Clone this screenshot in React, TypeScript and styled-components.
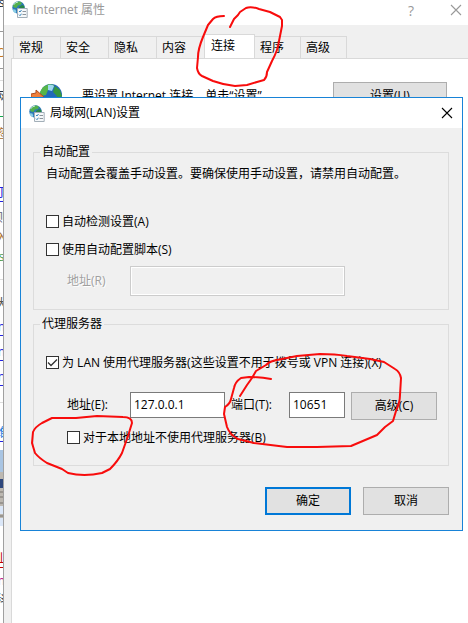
import React from "react";
import styled, { createGlobalStyle, css } from "styled-components";

const GlobalStyle = createGlobalStyle`
  * { box-sizing: border-box; }
  body {
    margin: 0;
    background: #fff;
    color: #000;
    font: 12px/16px "Open Sans", "Noto Sans CJK SC", sans-serif;
  }
  button, input { font: inherit; color: inherit; border-radius: 0; }
`;

const Desktop = styled.div`
  position: relative;
  display: flex;
  min-height: 100vh;
  overflow: hidden;
`;

/* Sliver of the web page that shows beside the window */
const PageEdge = styled.div`
  flex: none;
  width: 3px;
  height: 100vh;
  overflow: hidden;
`;

const Slice = styled.div<{ $h: number; $color?: string; $line?: string }>`
  display: flex;
  justify-content: center;
  align-items: flex-end;
  height: ${(p) => p.$h}px;
  overflow: hidden;
  white-space: nowrap;
  color: ${(p) => p.$color ?? "#333"};
  border-bottom: 1px solid ${(p) => p.$line ?? "transparent"};
`;

const Thumbnail = styled.svg`
  display: block;
`;

const Window = styled.div`
  flex: 1;
  min-width: 0;
  display: flex;
  flex-direction: column;
  background: #f0f0f0;
  border-left: 1px solid #a0a0a0;
`;

const TitleBar = styled.header<{ $dialog?: boolean }>`
  display: flex;
  align-items: center;
  background: #fff;
  ${(p) =>
    p.$dialog
      ? css`
          height: 30px;
          padding: 0 8px;
          gap: 5px;
        `
      : css`
          height: 25px;
          padding: 0 5px 6px 8px;
          gap: 5px;
          color: #999;
        `}
`;

const Title = styled.h1`
  flex: 1;
  margin: 0;
  font-size: 12px;
  font-weight: 400;
`;

const CaptionButton = styled.button`
  display: grid;
  place-items: center;
  width: 14px;
  height: 14px;
  padding: 0;
  border: 0;
  background: none;
  font-size: 14px;
`;

const CaptionGroup = styled.div`
  display: flex;
  gap: 31px;
`;

const Tabs = styled.div`
  display: flex;
  align-items: flex-end;
  height: 34px;
  padding-left: 9px;
`;

const Tab = styled.button<{ $active?: boolean; $narrow?: boolean }>`
  width: ${(p) => (p.$narrow ? 46 : 48)}px;
  height: 23px;
  padding: 0 0 0 5px;
  text-align: left;
  background: #f0f0f0;
  border: 1px solid #d9d9d9;
  border-left-width: 0;
  &:first-child { border-left-width: 1px; }
  ${(p) =>
    p.$active &&
    css`
      width: 50px;
      height: 25px;
      padding: 0 0 2px 6px;
      background: #fff;
      border-bottom-color: #fff;
    `}
`;

const TabPage = styled.main`
  flex: 1;
  margin-left: 7px;
  background: #fff;
  border-left: 1px solid #d9d9d9;
  box-shadow: 0 -1px 0 #d9d9d9;
`;

const SetupRow = styled.div`
  display: flex;
  align-items: flex-start;
  padding: 23px 21px 0 19px;
`;

const SetupText = styled.p`
  flex: 1;
  margin: 6px 0 0 19px;
`;

const PushButton = styled.button<{ $w: number; $default?: boolean }>`
  width: ${(p) => p.$w}px;
  height: 28px;
  padding: 0;
  background: #e1e1e1;
  border: ${(p) => (p.$default ? "2px solid #0078d7" : "1px solid #adadad")};
`;

const Dialog = styled.section`
  position: absolute;
  top: 97px;
  left: 20px;
  right: 5px;
  background: #f0f0f0;
  border: 1px solid #1883d7;
`;

const DialogBody = styled.div`
  display: flex;
  flex-direction: column;
  gap: 6px;
  padding: 16px 13px 15px 12px;
`;

const Group = styled.fieldset`
  min-width: 0;
  margin: 0;
  padding: 6px 11px 13px 12px;
  border: 1px solid #dcdcdc;
`;

const GroupTitle = styled.legend`
  margin-left: -6px;
  padding: 0 2px;
`;

const Note = styled.p`
  margin: 0 0 26px;
`;

const CheckRow = styled.label<{ $indent?: boolean; $gap?: number }>`
  display: flex;
  align-items: center;
  gap: 3px;
  height: 28px;
  padding-bottom: 1px;
  margin-top: ${(p) => p.$gap ?? 0}px;
  margin-left: ${(p) => (p.$indent ? 21 : 0)}px;
  white-space: nowrap;
`;

const BoxFrame = styled.span`
  display: grid;
  flex: none;
  > * { grid-area: 1 / 1; }
  svg { visibility: hidden; pointer-events: none; }
  input:checked + svg { visibility: visible; }
`;

const Box = styled.input`
  appearance: none;
  width: 13px;
  height: 13px;
  margin: 0;
  background: #fff;
  border: 1px solid #333;
`;

const FieldRow = styled.div<{ $gap: number }>`
  display: flex;
  align-items: flex-start;
  margin-top: ${(p) => p.$gap}px;
  padding-left: 21px;
`;

const FieldLabel = styled.label<{ $w: number; $muted?: boolean }>`
  flex: none;
  width: ${(p) => p.$w}px;
  line-height: ${(p) => (p.$muted ? 30 : 26)}px;
  color: ${(p) => (p.$muted ? "#a0a0a0" : "#000")};
  text-shadow: ${(p) => (p.$muted ? "1px 1px 0 #fff" : "none")};
`;

const TextBox = styled.input<{ $w: number }>`
  width: ${(p) => p.$w}px;
  height: 26px;
  margin-right: 6px;
  padding: 0 3px 2px;
  background: #fff;
  border: 1px solid #7a7a7a;
  &:disabled {
    height: 30px;
    background: #f0f0f0;
    border-color: #ccc;
    box-shadow: inset 0 0 0 1px #fff;
  }
`;

const Actions = styled.footer`
  display: flex;
  justify-content: flex-end;
  gap: 12px;
  margin-top: 15px;
`;

const Markup = styled.svg`
  position: absolute;
  top: 0;
  left: 0;
  pointer-events: none;
`;

const SettingsIcon = () => (
  <svg width="16" height="17" viewBox="0 0 16 17" aria-hidden="true">
    <circle cx="6.5" cy="6.5" r="6.2" fill="#2b78b8" />
    <path d="M4 1l4-.5 2 1.4-1.2 2L6 4.6 4.5 7 2 6.4.8 4.8z" fill="#53b04c" />
    <path d="M7 6l3-2 2.4 1v3L9 11 7 9z" fill="#268547" />
    <path d="M1.5 4Q3 1.2 6 1" stroke="#c5ead7" fill="none" />
    <path d="M.4 8.2l3 .3 1 2.4-1 1.2Q1 11 .4 8.2z" fill="#8dd0e6" />
    <path d="M5.5 7.5h9.7v9H5.5z" fill="#f5f8fa" stroke="#a3afb8" />
    <path d="M7 10l1 1 1.5-2M7 13.7l1 1 1.5-2" stroke="#3686bd" fill="none" />
    <path d="M10.5 10.5h3.5M10.5 13.5h3.5" stroke="#8c949b" />
  </svg>
);

const ConnectIcon = () => (
  <svg width="32" height="32" viewBox="0 0 32 32" aria-hidden="true">
    <circle cx="20" cy="13" r="11" fill="#2369b8" />
    <path d="M12 5l6-3 5 1-1 4-5 1-2 5-5 1-1-4z" fill="#56b548" />
    <path d="M24 4l5 4 2 6-3 4-3-5-3-3z" fill="#35973f" />
    <path d="M17 3q4-1 6 1l-2 5-4-1z" fill="#9ed8ef" />
    <path d="M0 12l5-1V8l8 7-8 8v-4H0z" fill="#ef7f3b" stroke="#ac4b20" />
  </svg>
);

const Cross = ({ color }: { color: string }) => (
  <svg width="12" height="12" viewBox="0 0 12 12" aria-hidden="true">
    <path d="M1 1l10 10M11 1L1 11" stroke={color} strokeWidth="1.1" />
  </svg>
);

const Check = ({
  label,
  checked,
  indent,
  gap,
}: {
  label: string;
  checked?: boolean;
  indent?: boolean;
  gap?: number;
}) => (
  <CheckRow $indent={indent} $gap={gap}>
    <BoxFrame>
      <Box type="checkbox" defaultChecked={checked} />
      <svg width="13" height="13" viewBox="0 0 13 13" aria-hidden="true">
        <path d="M2 6.5l3 3 6-6" stroke="#333" strokeWidth="1.3" fill="none" />
      </svg>
    </BoxFrame>
    {label}
  </CheckRow>
);

const tabs = ["常规", "安全", "隐私", "内容", "连接", "程序", "高级"];

export default function App() {
  return (
    <>
      <GlobalStyle />
      <Desktop>
        <PageEdge aria-hidden="true">
          <Slice $h={12} $color="#123">s</Slice>
          <Slice $h={20} $line="#999" />
          <Slice $h={30} $color="#c87820">O</Slice>
          <Slice $h={7} $line="#999" />
          <Slice $h={12} $line="#ddd" />
          <Slice $h={25} $color="#234">网</Slice>
          <Slice $h={11} $line="#12a84b" />
          <Slice $h={26} $color="#a86c30">您</Slice>
          <Slice $h={59} $color="#2222e0" $line="#2222e0">丁</Slice>
          <Slice $h={25} $color="#667">则</Slice>
          <Slice $h={20} $color="#a87030">入</Slice>
          <Slice $h={19} $color="#4a9a4a">s</Slice>
          <Slice $h={14} $line="#ddd" />
          <Slice $h={33} $color="#555">大</Slice>
          <Slice $h={23} $color="#2222e0" $line="#2222e0">n</Slice>
          <Slice $h={25} $color="#2222e0" $line="#2222e0">n</Slice>
          <Slice $h={25} $color="#2222e0" $line="#2222e0">n</Slice>
          <Slice $h={17} $line="#ddd" />
          <Slice $h={39} $color="#1d78e0" $line="#2222e0">维</Slice>
          <Slice $h={8} />
          <Thumbnail width="3" height="76" viewBox="0 0 3 76">
            <path d="M0 0h3v76H0z" fill="#bcb8b1" />
            <path d="M0 0h3v22H0z" fill="#a8c4e2" />
            <path d="M0 29h3v9H0z" fill="#2e477c" />
            <path d="M0 42h3M0 47h3M0 53h3M0 66h3" stroke="#77736f" />
            <path d="M0 56h3v8H0zM0 68h3v8H0z" fill="#dbe7f8" />
          </Thumbnail>
          <Slice $h={42} $color="#c00000" $line="#c00000">山</Slice>
          <Slice $h={22} $color="#c0108a">n</Slice>
          <Slice $h={19} $color="#234">科</Slice>
        </PageEdge>

        <Window>
          <TitleBar>
            <SettingsIcon />
            <Title>Internet 属性</Title>
            <CaptionGroup>
              <CaptionButton aria-label="帮助">?</CaptionButton>
              <CaptionButton aria-label="关闭">
                <Cross color="#999" />
              </CaptionButton>
            </CaptionGroup>
          </TitleBar>
          <Tabs role="tablist">
            {tabs.map((name, i) => (
              <Tab
                key={name}
                role="tab"
                $active={name === "连接"}
                $narrow={i > 4}
                aria-selected={name === "连接"}
              >
                {name}
              </Tab>
            ))}
          </Tabs>
          <TabPage>
            <SetupRow>
              <ConnectIcon />
              <SetupText>要设置 Internet 连接，单击“设置”</SetupText>
              <PushButton $w={114}>设置(U)</PushButton>
            </SetupRow>
          </TabPage>
        </Window>

        <Dialog role="dialog" aria-labelledby="lan-title">
          <TitleBar $dialog>
            <SettingsIcon />
            <Title id="lan-title">局域网(LAN)设置</Title>
            <CaptionButton aria-label="关闭">
              <Cross color="#000" />
            </CaptionButton>
          </TitleBar>
          <DialogBody>
            <Group>
              <GroupTitle>自动配置</GroupTitle>
              <Note>自动配置会覆盖手动设置。要确保使用手动设置，请禁用自动配置。</Note>
              <Check label="自动检测设置(A)" />
              <Check label="使用自动配置脚本(S)" />
              <FieldRow $gap={2}>
                <FieldLabel htmlFor="script" $w={63} $muted>地址(R)</FieldLabel>
                <TextBox id="script" $w={215} disabled />
              </FieldRow>
            </Group>
            <Group>
              <GroupTitle>代理服务器</GroupTitle>
              <Check label="为 LAN 使用代理服务器(这些设置不用于拨号或 VPN 连接)(X)" checked gap={11} />
              <FieldRow $gap={15}>
                <FieldLabel htmlFor="address" $w={63}>地址(E):</FieldLabel>
                <TextBox id="address" $w={95} defaultValue="127.0.0.1" />
                <FieldLabel htmlFor="port" $w={58}>端口(T):</FieldLabel>
                <TextBox id="port" $w={56} defaultValue="10651" />
                <PushButton $w={86}>高级(C)</PushButton>
              </FieldRow>
              <Check label="对于本地地址不使用代理服务器(B)" indent gap={4} />
            </Group>
            <Actions>
              <PushButton $w={86} $default>确定</PushButton>
              <PushButton $w={86}>取消</PushButton>
            </Actions>
          </DialogBody>
        </Dialog>

        <Markup width="468" height="623" viewBox="0 0 468 623" aria-hidden="true">
          <g fill="none" stroke="#f80c0c" strokeWidth="2" strokeLinecap="round" strokeLinejoin="round">
            <path d="M224 16Q216 16 213 19L208 25 203 37Q198 49 198 57L197 68Q198 74 202 76L213 81Q224 85 235 86L247 85 257 82 264 80Q267 77 267 72L272 61Q278 50 279 41L282 26V20L280 17 270 12 259 9Q251 6 246 8L240 12 238 15 234 19 230 27" />
            <path d="M271 379Q262 377 249 377L241 378Q235 382 234 388L231 399Q230 404 225 407L224 414 227 427Q230 435 238 439L254 443 287 447H317L351 446 377 435 385 427 393 421 396 411Q400 402 400 395L401 378Q400 372 395 369L384 362 370 359 347 356Q335 354 320 354L297 356 277 360Q270 361 266 365L256 371 252 378 247 385 240 396" />
            <path d="M76 418L97 416 123 417Q132 417 132 423L128 436 122 453Q118 461 110 469L102 473Q84 477 68 473L62 469 47 463Q39 458 35 453L32 443 33 432Q35 427 42 423L52 418Z" />
          </g>
        </Markup>
      </Desktop>
    </>
  );
}
